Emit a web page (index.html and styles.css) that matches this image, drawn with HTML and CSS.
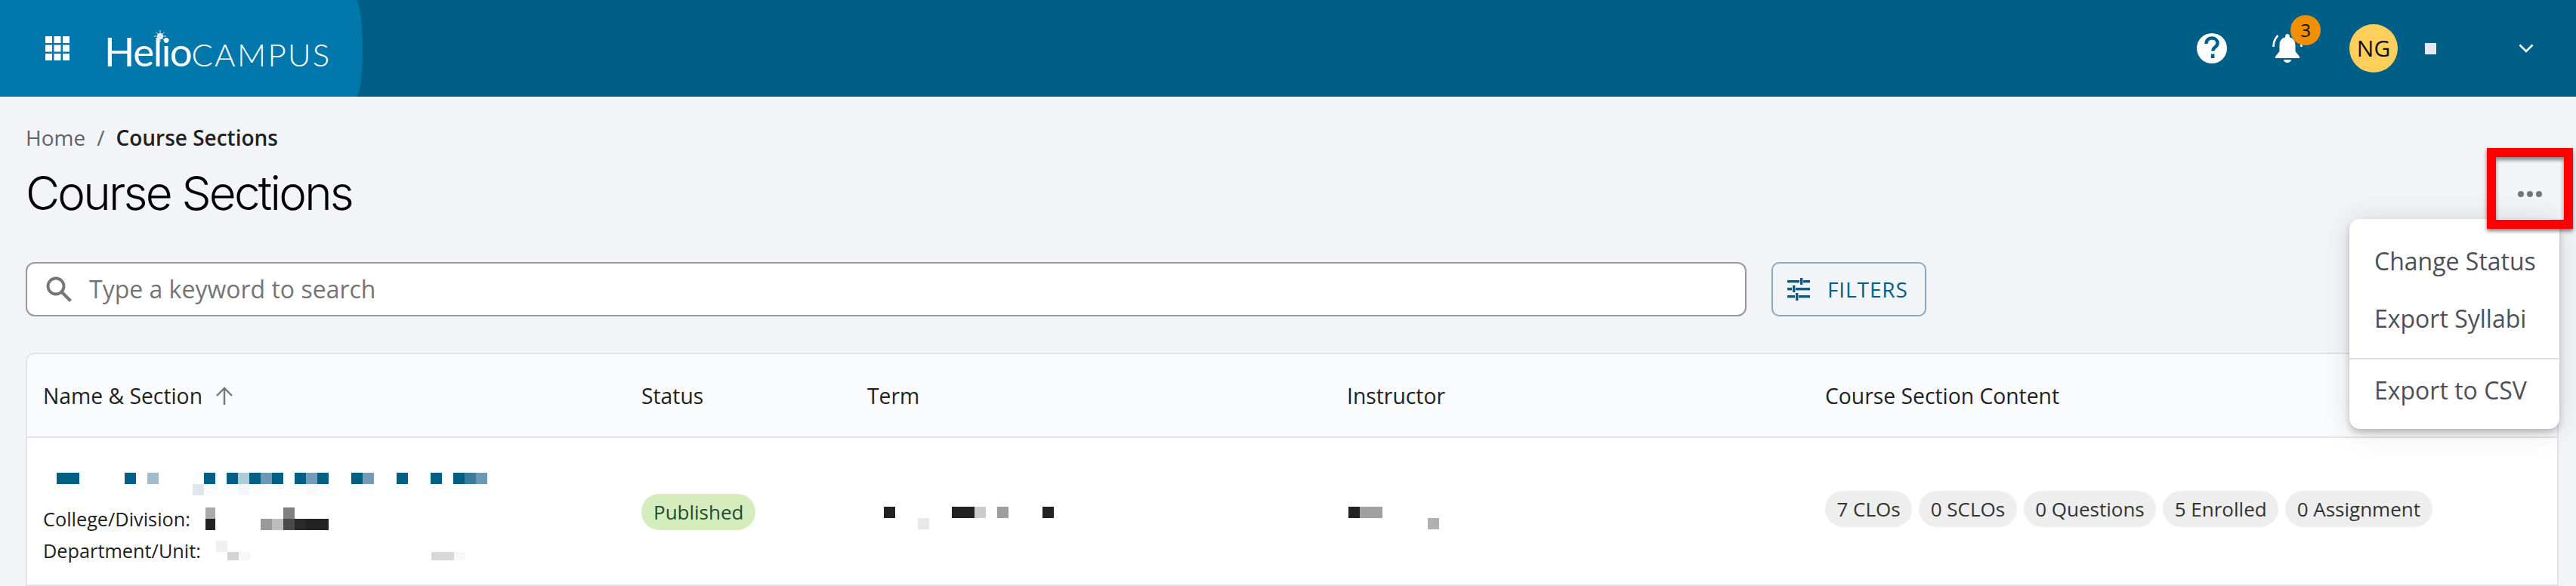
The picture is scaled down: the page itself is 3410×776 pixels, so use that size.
FILE: index.html
```html
<!DOCTYPE html>
<html lang="en">
<head>
  <meta charset="UTF-8" />
  <title>Course Sections</title>
  <link rel="stylesheet" href="styles.css">
</head>
<body>

  <header class="topbar">
    <div class="brand">
      <svg class="apps-icon" viewBox="0 0 32 32" aria-hidden="true">
        <g fill="#fff">
          <rect x="0" y="0" width="9" height="9"/><rect x="11.500" y="0" width="9" height="9"/><rect x="23" y="0" width="9" height="9"/>
          <rect x="0" y="11.500" width="9" height="9"/><rect x="11.500" y="11.500" width="9" height="9"/><rect x="23" y="11.500" width="9" height="9"/>
          <rect x="0" y="23" width="9" height="9"/><rect x="11.500" y="23" width="9" height="9"/><rect x="23" y="23" width="9" height="9"/>
        </g>
      </svg>
      <div class="logo">
        <span class="logo-helio">Helio</span><span class="logo-campus">CAMPUS</span>
        <svg class="logo-star" viewBox="0 0 16 16" aria-hidden="true">
          <circle cx="8" cy="8" r="4" fill="#fff"/>
          <path d="M8 0v16M0 8h16M2.500 2.500l11 11M13.500 2.500l-11 11" stroke="#cfe6f2" stroke-width="1"/>
        </svg>
      </div>
    </div>
    <div class="topbar-actions">
      <svg class="help-icon" viewBox="0 0 40 40" aria-hidden="true">
        <circle cx="20" cy="20" r="20" fill="#fff"/>
        <path d="M12.500 14c0-5 3.200-7.500 7.500-7.500 4.300 0 7.500 2.700 7.500 6.500 0 3-1.600 4.300-3.500 5.700-1.800 1.300-2.500 2.200-2.500 4.300v.5" fill="none" stroke="#005f87" stroke-width="4.400"/>
        <rect x="18.800" y="27.500" width="4.600" height="5.500" fill="#005f87"/>
      </svg>
      <div class="bell">
        <svg class="bell-icon" viewBox="0 0 42 40" aria-hidden="true">
          <path d="M20 1c-1.700 0-2.800 1.200-2.800 3v1.200C11.500 6.600 9.500 11 9.500 16v8L4 31v2h32v-2l-5.500-7v-8c0-5-2.500-9.400-7.700-10.800V4c0-1.800-1.100-3-2.800-3z" fill="#fff"/>
          <path d="M15 35h10c-.5 2.600-2.400 4-5 4s-4.500-1.400-5-4z" fill="#fff"/>
          <path d="M1.500 18C1.500 12 3.500 7 7.500 3" fill="none" stroke="#fff" stroke-width="2.600"/>
          <path d="M38.500 18c0-1-.1-2-.3-3" fill="none" stroke="#fff" stroke-width="2.600"/>
        </svg>
        <span class="bell-badge">3</span>
      </div>
      <div class="avatar">NG</div>
      <span class="user-name"></span>
      <svg class="chevron" viewBox="0 0 20 12" aria-hidden="true">
        <path d="M1.500 1.500L10 10l8.500-8.500" fill="none" stroke="#fff" stroke-width="2.600"/>
      </svg>
    </div>
  </header>

  <main class="content">
    <nav class="breadcrumb">
      <span class="crumb">Home</span>
      <span class="crumb-sep">/</span>
      <span class="crumb-current">Course Sections</span>
    </nav>
    <h1 class="page-title">Course Sections</h1>

    <div class="toolbar">
      <div class="search">
        <svg class="search-icon" viewBox="0 0 36 36" aria-hidden="true">
          <circle cx="14" cy="14" r="10.500" fill="none" stroke="#757575" stroke-width="3.800"/>
          <path d="M22 22l11.500 11.500" stroke="#757575" stroke-width="4"/>
        </svg>
        <span class="search-placeholder">Type a keyword to search</span>
      </div>
      <button class="filters-btn">
        <svg class="filters-icon" viewBox="0 0 30 30" aria-hidden="true">
          <g fill="#005f87">
            <rect x="0" y="3" width="16" height="3.400"/><rect x="21" y="3" width="9" height="3.400"/><rect x="17" y="0" width="3.400" height="9"/>
            <rect x="0" y="13" width="6" height="3.400"/><rect x="11" y="13" width="19" height="3.400"/><rect x="7" y="10" width="3.400" height="9"/>
            <rect x="0" y="23" width="10" height="3.400"/><rect x="15" y="23" width="15" height="3.400"/><rect x="11" y="20" width="3.400" height="10"/>
          </g>
        </svg>
        FILTERS
      </button>
    </div>

    <section class="table">
      <div class="table-row table-head">
        <div class="col col-name">Name &amp; Section
          <svg class="sort-icon" viewBox="0 0 24 24" aria-hidden="true">
            <path d="M12 24V2M2 12L12 2l10 10" fill="none" stroke="#757575" stroke-width="2.400"/>
          </svg>
        </div>
        <div class="col col-status">Status</div>
        <div class="col col-term">Term</div>
        <div class="col col-instructor">Instructor</div>
        <div class="col col-content">Course Section Content</div>
      </div>

      <div class="table-row table-body">
        <div class="col col-name section-cell">
          <svg class="mosaic mosaic-name" viewBox="0 0 570 30" aria-hidden="true">
            <rect x="0" width="30" height="15" fill="#005f87"/>
            <rect x="90" width="15" height="15" fill="#005f87"/>
            <rect x="120" width="15" height="15" fill="#a0bccd"/>
            <rect x="180" y="15" width="15" height="15" fill="#dfe7ee"/>
            <rect x="195" width="15" height="15" fill="#005f87"/>
            <rect x="225" width="15" height="15" fill="#005f87"/>
            <rect x="240" width="15" height="15" fill="#b0cad8"/>
            <rect x="240" y="15" width="15" height="15" fill="#f4f7fa"/>
            <rect x="255" width="15" height="15" fill="#005f87"/>
            <rect x="270" width="15" height="15" fill="#6b99b3"/>
            <rect x="285" width="15" height="15" fill="#005f87"/>
            <rect x="315" width="15" height="15" fill="#005f87"/>
            <rect x="330" width="15" height="15" fill="#729db8"/>
            <rect x="330" y="15" width="15" height="15" fill="#f7f9fb"/>
            <rect x="345" width="15" height="15" fill="#005f87"/>
            <rect x="390" width="15" height="15" fill="#005f87"/>
            <rect x="405" width="15" height="15" fill="#729db8"/>
            <rect x="450" width="15" height="15" fill="#005f87"/>
            <rect x="495" width="15" height="15" fill="#005f87"/>
            <rect x="525" width="15" height="15" fill="#005f87"/>
            <rect x="540" width="15" height="15" fill="#3a7a9e"/>
            <rect x="555" width="15" height="15" fill="#6d98b3"/>
          </svg>
          <div class="meta-line">College/Division:
            <svg class="mosaic mosaic-college" viewBox="0 0 165 30" aria-hidden="true">
              <rect x="0" width="13" height="15" fill="#aaa"/>
              <rect x="0" y="15" width="13" height="15" fill="#222"/>
              <rect x="73" y="15" width="15" height="15" fill="#9a9a9a"/>
              <rect x="88" y="15" width="15" height="15" fill="#bdbdbd"/>
              <rect x="103" width="15" height="15" fill="#808080"/>
              <rect x="103" y="15" width="15" height="15" fill="#4a4a4a"/>
              <rect x="118" y="15" width="15" height="15" fill="#2a2a2a"/>
              <rect x="133" y="15" width="30" height="15" fill="#222"/>
            </svg>
          </div>
          <div class="meta-line">Department/Unit:
            <svg class="mosaic mosaic-dept" viewBox="0 0 330 26" aria-hidden="true">
              <rect x="0" width="15" height="15" fill="#f0f0f0"/>
              <rect x="15" y="15" width="15" height="11" fill="#d4d4d4"/>
              <rect x="30" y="15" width="15" height="11" fill="#f7f7f7"/>
              <rect x="285" y="15" width="30" height="11" fill="#d8d8d8"/>
              <rect x="315" y="15" width="15" height="11" fill="#f8f8f8"/>
            </svg>
          </div>
        </div>
        <div class="col col-status"><span class="chip chip-published">Published</span></div>
        <div class="col col-term">
          <svg class="mosaic mosaic-term" viewBox="0 0 225 30" aria-hidden="true">
            <rect x="0" width="15" height="15" fill="#222"/>
            <rect x="45" y="15" width="15" height="15" fill="#e8e8e8"/>
            <rect x="90" width="30" height="15" fill="#222"/>
            <rect x="120" width="15" height="15" fill="#ccc"/>
            <rect x="150" width="15" height="15" fill="#9e9e9e"/>
            <rect x="210" width="15" height="15" fill="#222"/>
          </svg>
        </div>
        <div class="col col-instructor">
          <svg class="mosaic mosaic-instructor" viewBox="0 0 120 30" aria-hidden="true">
            <rect x="0" width="15" height="15" fill="#222"/>
            <rect x="15" width="30" height="15" fill="#a0a0a0"/>
            <rect x="105" y="15" width="15" height="15" fill="#b0b0b0"/>
          </svg>
        </div>
        <div class="col col-content chips">
          <span class="chip">7 CLOs</span>
          <span class="chip">0 SCLOs</span>
          <span class="chip">0 Questions</span>
          <span class="chip">5 Enrolled</span>
          <span class="chip">0 Assignment</span>
        </div>
      </div>
    </section>
  </main>

  <!-- open actions menu and the red marker round its trigger -->
  <div class="more-btn">
    <span class="more-dots"><i></i><i></i><i></i></span>
  </div>
  <div class="actions-menu">
    <div class="menu-item">Change Status</div>
    <div class="menu-item">Export Syllabi</div>
    <div class="menu-divider"></div>
    <div class="menu-item">Export to CSV</div>
  </div>

</body>
</html>
```

FILE: styles.css
```css
* {
  box-sizing: border-box;
}
body {
  margin: 0;
  height: 776px;
  overflow: hidden;
  position: relative;
  font-family: 'Open Sans', sans-serif;
  background: #f2f4f8;
  color: #212121;
}

/* top bar */
.topbar {
  height: 128px;
  background: #005f87;
  display: flex;
  align-items: center;
  justify-content: space-between;
}
.brand {
  width: 480px;
  height: 100%;
  background: #0277ab;
  border-top-right-radius: 9px 70px;
  border-bottom-right-radius: 9px 58px;
  display: flex;
  align-items: center;
  padding-left: 60px;
  gap: 46px;
}
.apps-icon {
  flex: none;
  width: 32px;
  height: 32px;
  margin-top: -1px;
}
.logo {
  position: relative;
  display: flex;
  flex: none;
  align-items: baseline;
  color: #fff;
  font-family: 'Lato', sans-serif;
  line-height: 1;
  margin-top: 7px;
}
.logo-helio {
  font-size: 53px;
  font-weight: 400;
  letter-spacing: -1.5px;
}
.logo-campus {
  font-size: 42px;
  font-weight: 300;
  letter-spacing: 2.3px;
}
.logo-star {
  position: absolute;
  left: 66px;
  top: -1px;
  width: 16px;
  height: 16px;
}
.topbar-actions {
  display: flex;
  align-items: center;
  padding-right: 56px;
}
.help-icon {
  width: 40px;
  height: 40px;
  margin-right: 60px;
}
.bell {
  position: relative;
  width: 42px;
  height: 40px;
  margin-right: 60px;
}
.bell-icon {
  width: 42px;
  height: 40px;
  display: block;
}
.bell-badge {
  position: absolute;
  left: 24px;
  top: -24px;
  width: 40px;
  height: 40px;
  border-radius: 50%;
  background: #f09000;
  color: #111;
  font-size: 24px;
  text-align: center;
  line-height: 40px;
}
.avatar {
  width: 64px;
  height: 64px;
  border-radius: 50%;
  background: #ffcf5c;
  color: #111;
  font-size: 30px;
  text-align: center;
  line-height: 64px;
  margin-right: 36px;
}
.user-name {
  width: 15px;
  height: 15px;
  background: #e3eaf1;
  margin-right: 109px;
}
.chevron {
  width: 20px;
  height: 12px;
}

/* page content */
.content {
  padding: 36px 23px 0 34px;
}
.breadcrumb {
  display: flex;
  align-items: center;
  gap: 15px;
  height: 36px;
  font-size: 28px;
}
.crumb,
.crumb-sep {
  color: #5f6368;
}
.crumb-current {
  font-weight: 600;
  color: #212121;
}
.page-title {
  margin: 20px 0 0 0;
  font-family: 'Inter', sans-serif;
  font-size: 62px;
  font-weight: 300;
  line-height: 72px;
  letter-spacing: -2.8px;
  color: #000;
}
.toolbar {
  display: flex;
  align-items: stretch;
  gap: 33px;
  height: 72px;
  margin-top: 55px;
}
.search {
  width: 2278px;
  background: #fff;
  border: 2px solid #999;
  border-radius: 12px;
  display: flex;
  align-items: center;
  padding-left: 24px;
  gap: 22px;
}
.search-icon {
  width: 36px;
  height: 36px;
}
.search-placeholder {
  font-size: 32px;
  color: #757575;
  margin-top: -2px;
}
.filters-btn {
  width: 205px;
  background: transparent;
  border: 2px solid #8aa9bf;
  border-radius: 10px;
  color: #005f87;
  font-family: inherit;
  font-size: 28px;
  letter-spacing: 0.9px;
  display: flex;
  align-items: center;
  gap: 23px;
  padding: 0 0 0 19px;
}
.filters-icon {
  width: 30px;
  height: 30px;
}

/* table */
.table {
  margin-top: 48px;
  background: #fff;
  border: 2px solid #e2e4e7;
  border-bottom: none;
  border-radius: 12px 12px 0 0;
}
.table-row {
  display: grid;
  grid-template-columns: 792px 299px 635px 633px 1fr;
  padding-left: 21px;
  align-items: center;
}
.table-head {
  height: 111px;
  background: #f9fbfc;
  border-radius: 12px 12px 0 0;
  border-bottom: 2px solid #e2e4e7;
  font-size: 28.3px;
}
.col-name {
  display: flex;
  align-items: center;
  gap: 17px;
}
.sort-icon {
  width: 24px;
  height: 24px;
}
.table-body {
  height: 196px;
  border-bottom: 2px solid #e2e4e7;
}
.section-cell {
  display: block;
  align-self: start;
  padding-top: 46px;
}
.mosaic {
  display: block;
}
.mosaic-name {
  width: 570px;
  height: 30px;
  margin: 0 0 10px 18px;
}
.meta-line {
  font-size: 25.3px;
  line-height: 42px;
  display: flex;
  align-items: center;
}
.mosaic-college {
  width: 165px;
  height: 30px;
  margin-left: 20px;
}
.mosaic-dept {
  width: 330px;
  height: 26px;
  margin-left: 20px;
}
.mosaic-term {
  width: 225px;
  height: 30px;
  margin: 18px 0 0 22px;
}
.mosaic-instructor {
  width: 120px;
  height: 30px;
  margin: 18px 0 0 2px;
}
.chip {
  display: inline-block;
  height: 48px;
  line-height: 48px;
  padding: 0 15.5px;
  border-radius: 24px;
  background: #eee;
  font-size: 26px;
  color: #333;
  white-space: nowrap;
}
.col-status {
  display: flex;
}
.chip-published {
  padding: 0 16px;
  background: #d5edbd;
  color: #1f4a33;
  margin-top: 2px;
}
.chips {
  display: flex;
  gap: 9px;
  margin-top: -6px;
}

/* actions menu */
.more-btn {
  position: absolute;
  left: 3292px;
  top: 196px;
  width: 114px;
  height: 107px;
  border: 12px solid #f00;
  box-shadow: 0 3px 5px rgba(0, 0, 0, 0.5), inset 0 4px 5px rgba(0, 0, 0, 0.45);
  display: flex;
  align-items: center;
  justify-content: center;
  z-index: 3;
}
.more-dots {
  display: flex;
  gap: 4px;
  margin-top: 14px;
}
.more-dots i {
  width: 8px;
  height: 8px;
  border-radius: 50%;
  background: #757575;
}
.actions-menu {
  position: absolute;
  left: 3110px;
  top: 290px;
  width: 278px;
  height: 278px;
  background: #fff;
  border-radius: 14px;
  box-shadow: 0 5px 8px rgba(0, 0, 0, 0.22), 0 2px 40px rgba(0, 0, 0, 0.12);
  z-index: 2;
  padding-top: 18px;
}
.menu-item {
  height: 76px;
  line-height: 76px;
  padding-left: 33px;
  font-size: 32px;
  color: #4f4f59;
}
.menu-divider {
  height: 2px;
  background: #e0e0e0;
  margin: 14px 0 3px;
}
```
